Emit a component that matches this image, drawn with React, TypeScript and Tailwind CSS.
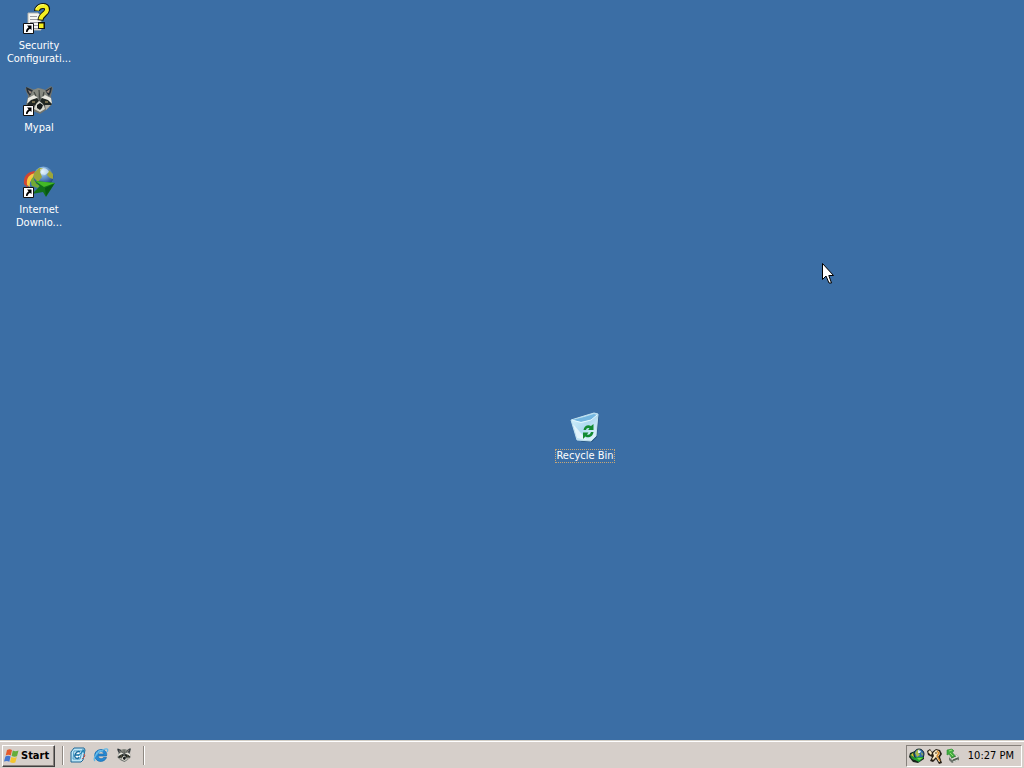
import type { ReactNode } from "react";

function ShortcutArrow() {
  return (
    <g>
      <path d="M0.5 21.5H10.5V31.5H0.5Z" fill="#fff" stroke="#111" />
      <path d="M4 23.5H8.5V28L7 26.7C5.5 27.6 4.8 28.6 4.6 30H3C2.9 28 4 26.3 5.6 25.2Z" fill="#000" />
    </g>
  );
}

function SecurityIcon() {
  return (
    <svg viewBox="0 0 32 32" className="size-8 overflow-visible" aria-hidden="true">
      <path d="M5 11H15L18 14V28H5Z" fill="#f6f6f1" stroke="#b5b5b0" />
      <path d="M7 14.5H14M7 17.5H15M7 20.5H15M11 23.5H15M11 26.5H15" stroke="#9a9aa0" />
      <path d="M14 9C14 3 25 2 24 8C23.5 12.5 18 12 17.5 18.5" fill="none" stroke="#16160c" strokeWidth="6" />
      <path d="M15 20H22V27H15Z" fill="#16160c" />
      <path d="M14 8.5C14.5 3 25 2 24 8C23.5 12.5 18 12 17.5 17.5" fill="none" stroke="#f4ef20" strokeWidth="4" />
      <path d="M16 21.5H20.5V26H16Z" fill="#f4ef20" />
      <path d="M13 7C14 3.5 18 2.5 21 2.8" fill="none" stroke="#ffff8c" />
      <ShortcutArrow />
    </svg>
  );
}

function Raccoon({ className }: { className: string }) {
  return (
    <svg viewBox="0 0 32 32" className={className} aria-hidden="true">
      <path d="M4 3L12 6C15 4 19 4 22 6L28 2L30 4L28 12L29 20L23 26L17 30L10 27L3 21L5 12L2 5Z" fill="#6f7370" />
      <path d="M3 3L11 7L7 12L4 8ZM29 3L22 7L26 12L28 8Z" fill="#242d35" />
      <path d="M5 6L9 8L7 10ZM27 5L23 8L26 9Z" fill="#9b8b7e" />
      <path d="M10 6L15 4L22 6L25 12L18 14L16 9L14 14L7 12Z" fill="#868980" />
      <path d="M5 14L11 11L15 14L10 16L4 20ZM28 14L22 11L18 14L23 16L29 20Z" fill="#e8e8df" />
      <path d="M4 20L8 16L14 14L16 17L13 21L7 23ZM29 20L25 16L19 14L17 17L20 21L26 23Z" fill="#202622" />
      <path d="M5 22L11 21L11 26ZM28 21L22 21L23 26Z" fill="#b3b1a6" />
      <path d="M13 20L16 17L20 20L22 25L17 28L11 25Z" fill="#d8d8cd" />
      <path d="M14 21L17 19L20 21L19 24L17 26L14 24Z" fill="#161b1b" />
      <path d="M16 6L17 17M11 8L13 12M21 8L20 12" stroke="#454a45" strokeWidth="1.2" />
      <path d="M9 18H12M22 18H25" stroke="#c8b27a" />
    </svg>
  );
}

function MypalIcon() {
  return (
    <span className="relative block size-8">
      <Raccoon className="size-8" />
      <svg viewBox="0 0 32 32" className="absolute inset-0 size-8" aria-hidden="true">
        <ShortcutArrow />
      </svg>
    </span>
  );
}

function DownloadIcon() {
  return (
    <svg viewBox="0 0 32 32" className="size-8" aria-hidden="true">
      <defs>
        <radialGradient id="globe" cx="0.45" cy="0.25" r="0.75">
          <stop offset="0" stopColor="#e8f7ff" />
          <stop offset="0.35" stopColor="#72a2d4" />
          <stop offset="1" stopColor="#123676" />
        </radialGradient>
      </defs>
      <path d="M13 5C5 5 0 10 1 18L5 22C4 15 8 11 14 9Z" fill="#d04732" />
      <path d="M13 7C6 8 3 12 4 19L7 21C6 15 9 12 14 11Z" fill="#f5c941" />
      <path d="M13 10C8 11 7 15 9 20L15 22L19 16Z" fill="#73a934" />
      <circle cx="20.5" cy="10.5" r="10" fill="url(#globe)" />
      <path d="M11 7L16 2L20 2L17 6L19 11L15 16L11 12ZM26 4L30 8L30 13L27 12L24 9Z" fill="#9ca63b" />
      <path d="M17 3C21 1 25 3 26 6L22 9L18 8Z" fill="#e5f2fa" opacity="0.65" />
      <path d="M12 15L32 17L23 31L20 26L9 28L17 20Z" fill="#12701b" />
      <path d="M12 15L32 17L21 21Z" fill="#43b927" />
      <path d="M22 22L31 18L23 30Z" fill="#075813" />
      <ShortcutArrow />
    </svg>
  );
}

function TrayGlobe() {
  return (
    <svg viewBox="0 0 16 16" className="size-4" aria-hidden="true">
      <path d="M6 3L1 5L0 9L4 14L9 15L15 11L15 8Z" fill="#17231b" />
      <path d="M5 4L1 7L3 11L6 12L8 9Z" fill="#288a35" />
      <path d="M2 7L4 5L5 9Z" fill="#e2bd36" />
      <circle cx="10" cy="6" r="5" fill="#2d6cac" stroke="#14262f" />
      <path d="M6 5L8 2L11 1L9 4L11 7L8 9ZM12 4L14 6L13 8Z" fill="#a8b94a" />
      <path d="M9 2L12 3L11 5L9 5Z" fill="#dceefa" />
      <path d="M4 11L8 9L15 9L10 14Z" fill="#21a534" />
      <path d="M8 10H14L10 12Z" fill="#74dc4a" />
    </svg>
  );
}

function RecycleIcon() {
  return (
    <svg viewBox="0 0 32 32" className="size-8" aria-hidden="true">
      <defs>
        <linearGradient id="bin-glass" x1="0" x2="1" y2="1">
          <stop stopColor="#d9f4fc" />
          <stop offset="0.5" stopColor="#b0daf1" />
          <stop offset="1" stopColor="#eefaff" />
        </linearGradient>
      </defs>
      <path d="M28 3L30 5L28 25L23 30L12 30Z" fill="#234e73" opacity="0.6" />
      <path d="M2 8L15 4L25 1L29 2L27 24L22 29L8 28Z" fill="url(#bin-glass)" stroke="#c2e2f0" />
      <path d="M3 8L15 5L25 2L28 3L22 8L12 10Z" fill="#73b6e0" />
      <path d="M3 8L12 10.5L22 8L28 3" fill="none" stroke="#e6f8ff" />
      <path d="M4 12L8 26L18 28L11 20Z" fill="#f3fcff" opacity="0.7" />
      <path d="M14.5 18C15 14 19 12 22 14L24.5 12V18H19L20.5 16.5C18.5 15.5 17.5 16.5 17 18Z" fill="#138b32" />
      <path d="M24.5 20C24 25 19 26.5 16.5 24.5L14 27V20.5H19.5L18 22.5C20 23.5 21.3 22 22 20Z" fill="#138b32" />
    </svg>
  );
}

function WindowsFlag() {
  return (
    <svg viewBox="0 0 16 16" className="size-4 shrink-0" aria-hidden="true">
      <path d="M3 2C5 0.8 6.5 1 8 2L6.8 7.5C5 6.5 3.5 6.5 1.7 7.5Z" fill="#e45a2c" />
      <path d="M8.8 2.5C10.5 3.5 12.5 3.5 14.5 2.5L13 8.3C11.5 9 9.5 9 7.6 8Z" fill="#65ad3a" />
      <path d="M1.4 8.4C3.2 7.5 5 7.5 6.6 8.4L5.3 13.7C3.8 12.7 2 12.7 0 13.5Z" fill="#4376d0" />
      <path d="M7.3 8.9C9.3 9.9 11 9.9 12.8 9.1L11.3 14.5C9.7 15.3 7.7 15.1 6 14.1Z" fill="#f4c52e" />
    </svg>
  );
}

function OutlookIcon() {
  return (
    <svg viewBox="0 0 16 16" className="size-4" aria-hidden="true">
      <path d="M4 1H14L15 3L13 13L11 15H1V5Z" fill="#bce5f6" stroke="#1d6796" />
      <path d="M4 4H12L10 12H3Z" fill="#f8fdff" stroke="#4499c6" />
      <path d="M10 5C6 3 3 10 6 11C7.5 12 9 11 9 10M5 8H9" fill="none" stroke="#176c9f" strokeWidth="1.4" />
      <path d="M8 9L14 3M12 3H14V6" fill="none" stroke="#2385b5" strokeWidth="1.2" />
      <path d="M14 7L15 9L12 12" fill="none" stroke="#c65246" />
    </svg>
  );
}

function ExplorerIcon() {
  return (
    <svg viewBox="0 0 16 16" className="size-4" aria-hidden="true">
      <path d="M13.5 9H5C5.5 12 9 12.5 10.5 10.5H13.5C12 15 5 16 2.5 11.5C0 6 4 2.5 8 2.5C12 2.5 14.5 5.5 13.5 9ZM5 7H11C10.5 4 6 3.5 5 7Z" fill="#2589d4" stroke="#1269ad" strokeWidth="0.7" />
      <path d="M3 8C4 4 7 3 10 4" fill="none" stroke="#8ed9fb" />
      <path d="M2 14C-1 11 5 5 10 3C14 1 16 2 14 5" fill="none" stroke="#63b9e6" strokeWidth="1.3" />
    </svg>
  );
}

function KeysIcon() {
  return (
    <svg viewBox="0 0 16 16" className="size-4" aria-hidden="true">
      <path d="M0 3L3 1L5 4L9 1L13 2L15 6L13 9L15 15L12 16L9 11L6 14L3 13L5 9L1 7Z" fill="#272016" />
      <path d="M1 4L3 2L5 5L4 7ZM6 5L9 2L12 3L13 6L11 9L13 14L12 14L9 9L6 12L5 11L7 8Z" fill="#f8e8c4" />
      <path d="M10 3L12 5L10 8L13 13" fill="none" stroke="#d48a2d" strokeWidth="1.4" />
      <path d="M8 5H10" stroke="#49351c" />
    </svg>
  );
}

function HardwareIcon() {
  return (
    <svg viewBox="0 0 16 16" className="size-4" aria-hidden="true">
      <path d="M4 9L11 6L14 9V12L7 15L4 12Z" fill="#6d746c" />
      <path d="M4 9L11 6L14 9L7 12Z" fill="#d7dbcf" />
      <path d="M6 10L11 8M8 12L13 10" stroke="#4e574c" />
      <path d="M8 14L13 12" stroke="#dce1da" />
      <path d="M7 1L2 2L2 7L4 6L7 10L10 8L7 4L9 3Z" fill="#42ad40" stroke="#248b2b" strokeWidth="0.6" />
      <path d="M4 3L7 2M5 5L8 8" stroke="#91de72" />
    </svg>
  );
}

function DesktopItem({ icon, children, focused = false }: { icon: ReactNode; children: ReactNode; focused?: boolean }) {
  return (
    <button type="button" className="flex w-[78px] flex-col items-center gap-[5px] text-white">
      {icon}
      <span className={focused ? "border border-dotted border-[#c6a777] leading-3" : "leading-[13px]"}>{children}</span>
    </button>
  );
}

function Divider() {
  return <span className="h-[19px] w-0.5 shrink-0 border-r border-l border-r-white border-l-[#8f8982]" />;
}

export default function App() {
  return (
    <div className="flex min-h-screen flex-col overflow-hidden bg-[#3b6ea5] font-['DejaVu_Sans_Condensed','DejaVu_Sans',sans-serif] text-[11px] font-stretch-condensed">
      <main className="relative flex-1">
        <ul className="flex flex-col gap-4 pt-0.5">
          <li className="h-[66px]">
            <DesktopItem icon={<SecurityIcon />}>Security<br />Configurati...</DesktopItem>
          </li>
          <li className="h-[66px]">
            <DesktopItem icon={<MypalIcon />}>Mypal</DesktopItem>
          </li>
          <li className="h-[66px]">
            <DesktopItem icon={<DownloadIcon />}>Internet<br />Downlo...</DesktopItem>
          </li>
        </ul>
        <div className="absolute top-[412px] left-[546px]">
          <DesktopItem icon={<RecycleIcon />} focused>Recycle Bin</DesktopItem>
        </div>
        <svg viewBox="0 0 12 21" className="pointer-events-none absolute top-[263px] left-[822px] h-[21px] w-3" aria-hidden="true">
          <path d="M0.5 0.5V16.5L4 13L7 20H9.5L6.8 12.5H11.5Z" fill="#fff" stroke="#000" />
        </svg>
      </main>
      <footer className="flex h-7 items-center border-t border-[#d4d0c8] bg-[#d6cfca] px-0.5 shadow-[inset_0_1px_0_#fff]">
        <button type="button" className="mt-0.5 flex h-[22px] w-[53px] items-center border border-t-white border-r-[#404040] border-b-[#404040] border-l-white pl-px font-bold shadow-[inset_-1px_-1px_0_#87817c]">
          <WindowsFlag />
          <span className="pt-px pl-px">Start</span>
        </button>
        <nav aria-label="Quick launch" className="flex items-center pt-px">
          <span className="flex pl-[7px]"><Divider /></span>
          <div className="flex gap-[7px] pr-[11px] pl-1.5">
            <button type="button" aria-label="Outlook Express"><OutlookIcon /></button>
            <button type="button" aria-label="Internet Explorer"><ExplorerIcon /></button>
            <button type="button" aria-label="Mypal"><Raccoon className="size-4" /></button>
          </div>
          <Divider />
        </nav>
        <div className="mt-0.5 ml-auto flex h-[22px] items-center border border-t-[#87817c] border-r-white border-b-white border-l-[#87817c] px-0.5">
          <div className="flex gap-0.5">
            <TrayGlobe />
            <KeysIcon />
            <HardwareIcon />
          </div>
          <time dateTime="22:27" className="pt-px pr-[5px] pl-[7px]">10:27 PM</time>
        </div>
      </footer>
    </div>
  );
}
